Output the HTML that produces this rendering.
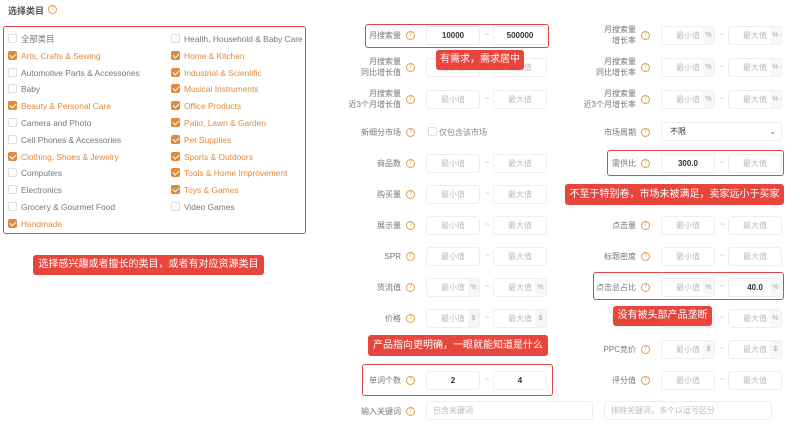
<!DOCTYPE html>
<html><head><meta charset="utf-8"><style>
*{box-sizing:border-box;margin:0;padding:0}
body{width:800px;height:428px;background:#fff;position:relative;overflow:hidden;font-family:"Liberation Sans","Noto Sans CJK SC",sans-serif;font-size:8px;color:#666}
.a{position:absolute;white-space:nowrap}
.cb{position:absolute;width:9px;height:9px;border:1px solid #ddd;border-radius:2px;background:#fff}
.cb.on{background:#e08a3c;border-color:#e08a3c}
.cb.on:after{content:"";position:absolute;left:2px;top:0px;width:3px;height:5px;border:solid #fff;border-width:0 1.3px 1.3px 0;transform:rotate(45deg)}
.cat{position:absolute;font-size:8.4px;color:#777;line-height:10px}
.cat.on{color:#e08a3c}
.q{position:absolute;width:9px;height:9px;border:1px solid #e0a050;border-radius:50%;font-size:6px;color:#e0a050;text-align:center;line-height:7px}
.in{position:absolute;height:19px;border:1px solid #eee;border-radius:3px;background:#fff;color:#bbb;font-size:8px;text-align:center;line-height:17px}
.in .s{position:absolute;right:0;top:0;width:11px;height:17px;background:#f7f7f7;color:#aaa;font-size:7px;text-align:center}
.v{color:#333;font-weight:bold}
.lb{position:absolute;text-align:right;font-size:8px;color:#777;line-height:11px}
.tl{position:absolute;color:#bbb}
.rb{position:absolute;border:1.5px solid #e04545;border-radius:3px}
.tag{position:absolute;background:#e8453c;color:#fff;border-radius:3px;font-size:10px;text-align:center;white-space:nowrap}
</style></head><body>
<div class="a" style="left:8px;top:4px;font-size:9px;color:#555;font-weight:bold">选择类目</div>
<div class="q" style="left:48px;top:5px">?</div>
<div class="rb" style="left:3px;top:26px;width:303px;height:208px"></div>
<div id="cats"></div>
<div class="tag" style="left:33px;top:255px;width:231px;height:20px;line-height:20px">选择感兴趣或者擅长的类目，或者有对应资源类目</div>
<div id="form"></div>
<div class="rb" style="left:365px;top:24px;width:184px;height:24px"></div>
<div class="tag" style="left:436px;top:50px;width:88px;height:20px;line-height:20px">有需求，需求居中</div>
<div class="rb" style="left:607px;top:150px;width:177px;height:26px"></div>
<div class="tag" style="left:565px;top:184px;width:219px;height:21px;line-height:21px">不至于特别卷，市场未被满足，卖家远小于买家</div>
<div class="rb" style="left:593px;top:272px;width:191px;height:28px"></div>
<div class="tag" style="left:613px;top:306px;width:99px;height:20px;line-height:20px">没有被头部产品垄断</div>
<div class="tag" style="left:368px;top:335px;width:180px;height:21px;line-height:21px">产品指向更明确，一眼就能知道是什么</div>
<div class="rb" style="left:362px;top:364px;width:191px;height:32px"></div>
<script>
var L=[["全部类目",0],["Arts, Crafts & Sewing",1],["Automotive Parts & Accessories",0],["Baby",0],["Beauty & Personal Care",1],["Camera and Photo",0],["Cell Phones & Accessories",0],["Clothing, Shoes & Jewelry",1],["Computers",0],["Electronics",0],["Grocery & Gourmet Food",0],["Handmade",1]];
var R=[["Health, Household & Baby Care",0],["Home & Kitchen",1],["Industrial & Scientific",1],["Musical Instruments",1],["Office Products",1],["Patio, Lawn & Garden",1],["Pet Supplies",1],["Sports & Outdoors",1],["Tools & Home Improvement",1],["Toys & Games",1],["Video Games",0]];
var h="";
function row(a,x,i){var y=39+i*16.8;h+='<div class="cb'+(a[1]?' on':'')+'" style="left:'+x+'px;top:'+(y-5)+'px"></div><div class="cat'+(a[1]?' on':'')+'" style="left:'+(x+13)+'px;top:'+(y-5)+'px">'+a[0]+'</div>';}
L.forEach(function(a,i){row(a,8,i)});R.forEach(function(a,i){row(a,171,i)});
document.getElementById("cats").innerHTML=h;
var f="";
function lab(t,xr,y){var two=t.indexOf("|")>0;var s=t.replace("|","<br>");f+='<div class="lb" style="right:'+(800-xr)+'px;top:'+(y-(two?11:5.5))+'px">'+s+'</div><div class="q" style="left:'+(xr+5)+'px;top:'+(y-4.5)+'px">?</div>';}
function inp(x,y,w,val,suf){f+='<div class="in" style="left:'+x+'px;top:'+(y-9.5)+'px;width:'+w+'px">'+(val?'<span class="v">'+val+'</span>':'')+(suf?'<span class="s">'+suf+'</span>':'')+'</div>';}
function pair(x,y,a,b,suf){inp(x,y,54,a||"<span style=color:#bbb;font-weight:normal>最小值</span>",suf);f+='<div class="tl" style="left:'+(x+59)+'px;top:'+(y-5)+'px">~</div>';inp(x+67,y,54,b||"<span style=color:#bbb;font-weight:normal>最大值</span>",suf);}
var M=[["月搜索量",35,"10000","500000"],["月搜索量|同比增长值",67],["月搜索量|近3个月增长值",99],null,["商品数",163],["购买量",194],["展示量",225],["SPR",256],["货流值",287,0,0,"%"],["价格",318,0,0,"$"],null,["单词个数",380,"2","4"]];
M.forEach(function(m){if(!m)return;lab(m[0],401,m[1]);pair(426,m[1],m[2],m[3],m[4]);});
lab("新细分市场",401,132);f+='<div class="cb" style="left:428px;top:127px"></div><div class="a" style="left:439px;top:127px;color:#888">仅包含该市场</div>';
var N=[["月搜索量|增长率",35,0,0,"%"],["月搜索量|同比增长率",67,0,0,"%"],["月搜索量|近3个月增长率",99,0,0,"%"],null,["需供比",163,"300.0"],null,["点击量",225],["标题密度",256],["点击总占比",287,0,"40.0","%"],["转化率",318,0,0,"%"],["PPC竞价",349,0,0,"$"],["评分值",380]];
N.forEach(function(m){if(!m)return;lab(m[0],636,m[1]);pair(661,m[1],m[2],m[3],m[4]);});
lab("市场周期",636,132);f+='<div class="in" style="left:661px;top:122px;width:121px;text-align:left;padding-left:8px;color:#333">不限<span style="position:absolute;right:5px;color:#666">⌄</span></div>';
lab("输入关键词",401,411);
f+='<div class="in" style="left:426px;top:401px;width:167px;text-align:left;padding-left:6px">包含关键词</div><div class="in" style="left:604px;top:401px;width:168px;text-align:left;padding-left:6px">排除关键词，多个以逗号区分</div>';
document.getElementById("form").innerHTML=f;
</script>
</body></html>
